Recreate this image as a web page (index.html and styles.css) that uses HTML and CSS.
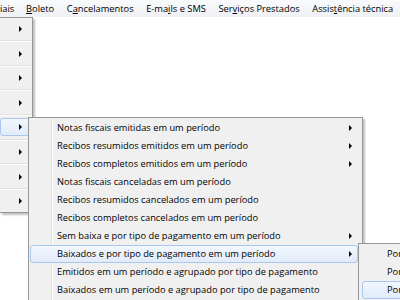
FILE: index.html
```html
<!DOCTYPE html>
<html lang="pt">
<head>
  <meta charset="UTF-8" />
  <title>Relatórios</title>
  <link rel="stylesheet" href="styles.css">
</head>
<body>
  <div class="screen">
    <div class="menubar">
      <span class="first">iais</span>
      <span><u>B</u>oleto</span>
      <span>C<u>a</u>ncelamentos</span>
      <span>E-ma<u>i</u>ls e SMS</span>
      <span>Ser<u>v</u>iços Prestados</span>
      <span>Assis<u>t</u>ência técnica</span>
    </div>

    <div class="menu menu-main">
      <div class="item sub"></div>
      <div class="sep"></div>
      <div class="item sub"></div>
      <div class="sep"></div>
      <div class="item sub"></div>
      <div class="sep"></div>
      <div class="item sub"></div>
      <div class="sep"></div>
      <div class="item sub hot"></div>
      <div class="sep"></div>
      <div class="item sub"></div>
      <div class="sep"></div>
      <div class="item sub"></div>
      <div class="sep"></div>
      <div class="item sub"></div>
    </div>

    <div class="menu menu-sub">
      <div class="item sub">Notas fiscais emitidas em um período</div>
      <div class="item sub">Recibos resumidos emitidos em um período</div>
      <div class="item sub">Recibos completos emitidos em um período</div>
      <div class="item">Notas fiscais canceladas em um período</div>
      <div class="item">Recibos resumidos cancelados em um período</div>
      <div class="item">Recibos completos cancelados em um período</div>
      <div class="item sub">Sem baixa e por tipo de pagamento em um período</div>
      <div class="item sub hot">Baixados e por tipo de pagamento em um período</div>
      <div class="item">Emitidos em um período e agrupado por tipo de pagamento</div>
      <div class="item">Baixados em um período e agrupado por tipo de pagamento</div>
    </div>

    <div class="menu menu-sub2">
      <div class="item">Por</div>
      <div class="item">Por</div>
      <div class="item hot">Por</div>
    </div>
  </div>
</body>
</html>
```

FILE: styles.css
```css
body {
  margin: 0;
  font-family: 'Open Sans', 'Noto Sans', sans-serif;
  font-size: 9.3px;
  color: #000;
  background: #fff;
}

.screen {
  position: relative;
  width: 400px;
  height: 300px;
  overflow: hidden;
}

.menubar {
  display: flex;
  align-items: center;
  height: 17px;
  background: linear-gradient(#f9fafb, #eef0f3);
}

.menubar span {
  padding: 0 6.3px;
  white-space: nowrap;
}

.menubar span.first {
  padding: 0 5.5px 0 0;
}

.menu {
  position: absolute;
  background: #f0f0f0;
  border: 1px solid #979797;
  box-shadow: 2px 2px 2px rgba(0, 0, 0, 0.25);
}

.menu-main {
  left: 0;
  top: 17px;
  width: 32px;
  padding: 2px 0;
  border-left: none;
}

.menu-sub {
  left: 28px;
  top: 117px;
  width: 333px;
  height: 200px;
  padding: 1px 0;
  background: linear-gradient(to right, #f0f0f0 22px, #e2e3e3 22px, #e2e3e3 23px, #fff 23px, #fff 24px, #f0f0f0 24px);
}

.menu-sub2 {
  left: 358px;
  top: 243px;
  width: 120px;
  height: 80px;
  padding: 1px 0;
}

.item {
  position: relative;
  height: 18px;
  line-height: 16px;
  box-sizing: border-box;
  border: 1px solid transparent;
  border-radius: 3px;
  white-space: nowrap;
}

.menu-main .item {
  margin: 0 1px 0 0;
}

.menu-sub .item {
  margin: 0 4px 0 1px;
  padding-left: 26px;
}

.menu-sub2 .item {
  margin: 0 0 0 3px;
  padding-left: 24px;
}

.item.sub::after {
  content: '';
  position: absolute;
  right: 8px;
  top: 5px;
  border-left: 3px solid #000;
  border-top: 3px solid transparent;
  border-bottom: 3px solid transparent;
}

.menu-sub .item.sub::after {
  right: 5px;
}

.item.hot {
  border-color: #aac8ee;
  background: linear-gradient(#f2f7fe, #e1ebf9);
}

.sep {
  height: 1px;
  margin: 2.3px 0;
  background: #e0e0e0;
  border-bottom: 1px solid #fff;
}
```
